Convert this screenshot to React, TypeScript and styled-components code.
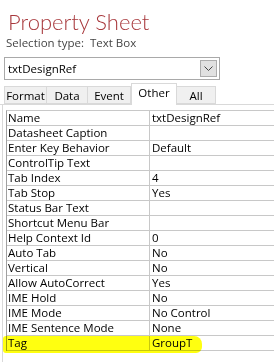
import React from 'react';
import styled, { createGlobalStyle } from 'styled-components';

const GlobalStyle = createGlobalStyle`
  body {
    margin: 0;
    background: #ffffff;
    font-family: "Open Sans", "Liberation Sans", Arial, sans-serif;
    overflow: hidden;
  }
`;

const Sheet = styled.div`
  width: 274px;
  height: 362px;
  display: flex;
  flex-direction: column;
  overflow: hidden;
  background: #ffffff;
`;

const Title = styled.div`
  font-family: Lato, sans-serif;
  font-weight: 300;
  font-size: 22px;
  line-height: 28px;
  color: #a8383c;
  padding: 8px 0 0 8px;
  height: 28px;
  white-space: nowrap;
`;

const SelectionType = styled.div`
  font-size: 11.5px;
  line-height: 14px;
  color: #444444;
  padding-left: 6px;
  height: 14px;
  white-space: nowrap;
`;

const Combo = styled.div`
  margin: 7px 0 0 4px;
  width: 216px;
  height: 23px;
  box-sizing: border-box;
  border: 1px solid #a9a9a9;
  display: flex;
  align-items: center;
  justify-content: space-between;
  font-size: 11.5px;
  color: #000;
  padding-left: 3px;
`;

const DropButton = styled.div`
  width: 17px;
  height: 17px;
  box-sizing: border-box;
  margin-right: 2px;
  background: #e1e1e1;
  border: 1px solid #adadad;
  display: flex;
  align-items: center;
  justify-content: center;
`;

const TabStrip = styled.div`
  display: flex;
  align-items: flex-end;
  margin-top: 3px;
  padding-left: 4px;
  height: 21px;
  border-bottom: 1px solid #d9d9d9;
`;

const Tab = styled.div<{ $w: number; $active?: boolean }>`
  width: ${(p) => p.$w}px;
  box-sizing: border-box;
  height: ${(p) => (p.$active ? 22 : 18)}px;
  margin-bottom: ${(p) => (p.$active ? -1 : 0)}px;
  background: ${(p) => (p.$active ? '#ffffff' : '#f0f0f0')};
  border: 1px solid #d9d9d9;
  border-bottom: ${(p) => (p.$active ? 'none' : '1px solid #d9d9d9')};
  border-left: ${(p) => (p.$active ? '1px solid #d9d9d9' : 'none')};
  font-size: 11.5px;
  color: #000;
  display: flex;
  align-items: ${(p) => (p.$active ? 'flex-start' : 'center')};
  padding-top: ${(p) => (p.$active ? 1 : 0)}px;
  justify-content: center;
  &:first-child {
    border-left: 1px solid #d9d9d9;
  }
`;

const Panel = styled.div`
  flex: 1;
  margin-left: 2px;
  border-left: 1px solid #d9d9d9;
  padding: 5px 0 0 3px;
`;

const Grid = styled.div`
  border-left: 1px solid #a0a0a0;
  border-top: 1px solid #c8c8c8;
  position: relative;
`;

const Row = styled.div`
  display: grid;
  grid-template-columns: 142px 1fr;
  height: 15px;
  box-sizing: border-box;
  border-bottom: 1px solid #c8c8c8;
  font-size: 11.5px;
  line-height: 14px;
  color: #000;
`;

const Label = styled.div`
  padding-left: 1px;
  white-space: nowrap;
  overflow: hidden;
`;

const Value = styled.div`
  border-left: 1px solid #c8c8c8;
  padding-left: 2px;
  white-space: nowrap;
`;

const Highlight = styled.div`
  position: absolute;
  left: -4px;
  top: 225px;
  width: 199px;
  height: 17px;
  background: #ffff10;
  mix-blend-mode: multiply;
  border-radius: 3px 8px 6px 3px;
  pointer-events: none;
`;

const rows: [string, string][] = [
  ['Name', 'txtDesignRef'],
  ['Datasheet Caption', ''],
  ['Enter Key Behavior', 'Default'],
  ['ControlTip Text', ''],
  ['Tab Index', '4'],
  ['Tab Stop', 'Yes'],
  ['Status Bar Text', ''],
  ['Shortcut Menu Bar', ''],
  ['Help Context Id', '0'],
  ['Auto Tab', 'No'],
  ['Vertical', 'No'],
  ['Allow AutoCorrect', 'Yes'],
  ['IME Hold', 'No'],
  ['IME Mode', 'No Control'],
  ['IME Sentence Mode', 'None'],
  ['Tag', 'GroupT'],
];

const tabs = [
  { name: 'Format', w: 43 },
  { name: 'Data', w: 41 },
  { name: 'Event', w: 43 },
  { name: 'Other', w: 46, active: true },
  { name: 'All', w: 39 },
];

export default function App() {
  return (
    <Sheet>
      <GlobalStyle />
      <Title>Property Sheet</Title>
      <SelectionType>Selection type:&nbsp; Text Box</SelectionType>
      <Combo>
        <span>txtDesignRef</span>
        <DropButton>
          <svg width="9" height="6" viewBox="0 0 9 6">
            <path d="M0.5 0.5 L4.5 4.5 L8.5 0.5" fill="none" stroke="#444" strokeWidth="1" />
          </svg>
        </DropButton>
      </Combo>
      <TabStrip>
        {tabs.map((t) => (
          <Tab key={t.name} $w={t.w} $active={t.active}>
            {t.name}
          </Tab>
        ))}
      </TabStrip>
      <Panel>
        <Grid>
          {rows.map(([k, v]) => (
            <Row key={k}>
              <Label>{k}</Label>
              <Value>{v}</Value>
            </Row>
          ))}
          <Highlight />
        </Grid>
      </Panel>
    </Sheet>
  );
}
